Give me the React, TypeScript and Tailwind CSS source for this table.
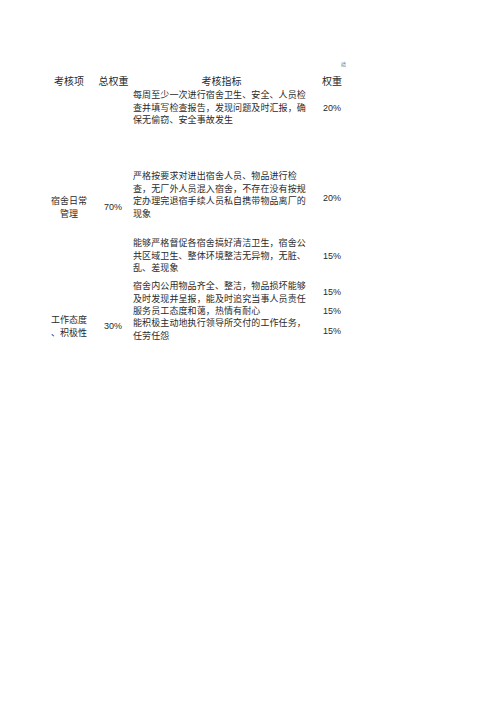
const cjk = "font-['Noto_Sans_CJK_SC',sans-serif]";
const num = "font-['Liberation_Sans',Arial,sans-serif]";

type Item = { lines: string[]; weight: string; row: string; pct?: string };

const items: Item[] = [
  {
    lines: ["每周至少一次进行宿舍卫生、安全、人员检", "查并填写检查报告，发现问题及时汇报，确", "保无偷窃、安全事故发生"],
    weight: "20%",
    row: "row-start-2",
  },
  {
    lines: ["严格按要求对进出宿舍人员、物品进行检", "查，无厂外人员混入宿舍，不存在没有按规", "定办理完退宿手续人员私自携带物品离厂的", "现象"],
    weight: "20%",
    row: "row-start-4",
    pct: "pt-[6px]",
  },
  {
    lines: ["能够严格督促各宿舍搞好清洁卫生，宿舍公", "共区域卫生、整体环境整洁无异物，无脏、", "乱、差现象"],
    weight: "15%",
    row: "row-start-6",
  },
  {
    lines: ["宿舍内公用物品齐全、整洁，物品损坏能够", "及时发现并呈报，能及时追究当事人员责任"],
    weight: "15%",
    row: "row-start-8",
  },
  {
    lines: ["服务员工态度和蔼，热情有耐心"],
    weight: "15%",
    row: "row-start-9",
  },
  {
    lines: ["能积极主动地执行领导所交付的工作任务，", "任劳任怨"],
    weight: "15%",
    row: "row-start-10",
    pct: "pt-[4px]",
  },
];

export default function App() {
  return (
    <div className={`w-[496px] h-[702px] bg-white text-[#2a2a2a] ${cjk}`}>
      <div className="pt-[58px] pl-[44px]">
        <div className="w-[310px] flex justify-end pr-[8px] h-[12px]">
          <span className="text-[5px] leading-[12px] text-[#777]">绩</span>
        </div>
        <div className="grid grid-cols-[50px_39px_177px_44px] grid-rows-[20px_36px_44px_50px_17px_38px_5px_25px_12px_25px] text-[9px] leading-[12.5px]">
          {/* header */}
          <div className="row-start-1 col-start-1 self-center text-center text-[10px] pt-[3px]">考核项</div>
          <div className="row-start-1 col-start-2 self-center text-center text-[10px] pt-[3px]">总权重</div>
          <div className="row-start-1 col-start-3 self-center text-center text-[10px] pt-[3px]">考核指标</div>
          <div className="row-start-1 col-start-4 self-center text-center text-[10px] pt-[3px]">权重</div>

          {/* group 1 */}
          <div className="row-start-4 col-start-1 self-end text-center">
            <div>宿舍日常</div>
            <div>管理</div>
          </div>
          <div className={`row-start-4 col-start-2 self-end pb-[7px] pl-[10px] ${num}`}>70%</div>

          {/* group 2 */}
          <div className="row-start-9 row-span-2 col-start-1 self-center text-center pt-[6px]">
            <div>工作态度</div>
            <div>、积极性</div>
          </div>
          <div className={`row-start-9 row-span-2 col-start-2 self-center pl-[10px] pt-[6px] ${num}`}>30%</div>

          {items.map((it, i) => (
            <div key={i} className="contents">
              <div className={`${it.row} col-start-3 self-center tracking-[0.1px]`}>
                {it.lines.map((l, j) => (
                  <div key={j} className="whitespace-nowrap">{l}</div>
                ))}
              </div>
              <div className={`${it.row} col-start-4 self-center text-center ${num} ${it.pct ?? ""}`}>{it.weight}</div>
            </div>
          ))}
        </div>
      </div>
    </div>
  );
}
